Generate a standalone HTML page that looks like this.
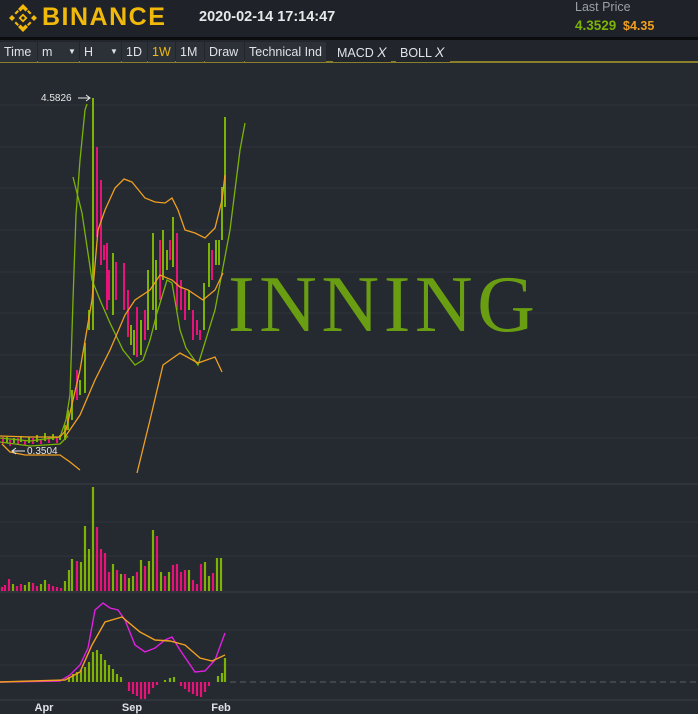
<!DOCTYPE html>
<html><head><meta charset="utf-8"><style>
*{margin:0;padding:0;box-sizing:border-box}
body{width:698px;height:714px;background:#252930;position:relative;overflow:hidden;font-family:"Liberation Sans",sans-serif}
#hdr{position:absolute;left:0;top:0;width:698px;height:37px;background:#1f2228}
#blk{position:absolute;left:0;top:37px;width:698px;height:3px;background:#0b0c0e}
#tb{position:absolute;left:0;top:40px;width:698px;height:23px;background:#22262c;border-bottom:2px solid #8a7f2a}
.b{position:absolute;top:2px;height:20px;background:#2c3037;color:#dfe2e6;font-size:12.5px;line-height:20px;padding-left:4px}
</style></head><body>
<div id="hdr">
<svg style="position:absolute;left:7px;top:2px" width="32" height="32" viewBox="0 0 32 32">
<g fill="#f0b90b"><path d="M16 2l5 5-2.5 2.5L16 7l-2.5 2.5L11 7z"/><path d="M16 30l5-5-2.5-2.5L16 25l-2.5-2.5L11 25z"/><path d="M2 16l3-3 3 3-3 3z"/><path d="M24 16l3-3 3 3-3 3z"/><path d="M16 11.5l4.5 4.5-4.5 4.5-4.5-4.5z M16 14l-2 2 2 2 2-2z" fill-rule="evenodd"/><path d="M7.5 11l3-3 1.5 1.5-3 3z"/><path d="M24.5 11l-3-3-1.5 1.5 3 3z"/><path d="M7.5 21l3 3 1.5-1.5-3-3z"/><path d="M24.5 21l-3 3-1.5-1.5 3-3z"/></g></svg>
<div style="position:absolute;left:42px;top:3px;color:#f0b90b;font-size:25px;font-weight:bold;letter-spacing:1.5px">BINANCE</div>
<div style="position:absolute;left:199px;top:9px;color:#e6e8ea;font-size:14.5px;font-weight:bold">2020-02-14 17:14:47</div>
<div style="position:absolute;left:575px;top:0px;color:#9aa0a8;font-size:12.5px">Last Price</div>
<div style="position:absolute;left:575px;top:18px;color:#7cb305;font-size:13.5px;font-weight:bold">4.3529</div>
<div style="position:absolute;left:623px;top:19px;color:#f0a020;font-size:12.5px;font-weight:bold">$4.35</div>
</div>
<div id="blk"></div>
<div id="tb">
<div class="b" style="left:0;width:37px">Time</div>
<div class="b" style="left:38px;width:41px">m<span style="position:absolute;left:30px;font-size:8px">▼</span></div>
<div class="b" style="left:80px;width:41px">H<span style="position:absolute;left:30px;font-size:8px">▼</span></div>
<div class="b" style="left:122px;width:25px">1D</div>
<div class="b" style="left:148px;width:27px;color:#f0b90b">1W</div>
<div class="b" style="left:176px;width:28px">1M</div>
<div class="b" style="left:205px;width:39px">Draw</div>
<div class="b" style="left:245px;width:81px">Technical Ind</div>
<div class="b" style="left:333px;width:58px;background:#22262c">MACD <i style="font-size:14px">X</i></div>
<div class="b" style="left:396px;width:54px;background:#22262c">BOLL <i style="font-size:14px">X</i></div>
</div>
<svg style="position:absolute;left:0;top:65px" width="698" height="649" viewBox="0 65 698 649">
<g stroke="#30353d" stroke-width="1">
<line x1="0" y1="105" x2="698" y2="105"/><line x1="0" y1="147" x2="698" y2="147"/><line x1="0" y1="188" x2="698" y2="188"/><line x1="0" y1="230" x2="698" y2="230"/><line x1="0" y1="272" x2="698" y2="272"/><line x1="0" y1="313" x2="698" y2="313"/><line x1="0" y1="355" x2="698" y2="355"/><line x1="0" y1="397" x2="698" y2="397"/><line x1="0" y1="438" x2="698" y2="438"/>
<line x1="0" y1="522" x2="698" y2="522"/><line x1="0" y1="556" x2="698" y2="556"/>
<line x1="0" y1="630" x2="698" y2="630"/><line x1="0" y1="665" x2="698" y2="665"/>
</g>
<g stroke="#3a3f47"><line x1="0" y1="484" x2="698" y2="484"/><line x1="0" y1="592" x2="698" y2="592"/><line x1="0" y1="700" x2="698" y2="700"/></g>
<line x1="230" y1="682" x2="698" y2="682" stroke="#5a5f66" stroke-dasharray="6,4"/>
<text x="228" y="331" font-family="Liberation Serif,serif" font-size="80" letter-spacing="4.5" fill="#6a9e12">INNING</text>
<g stroke-width="2">
<g stroke="#7cb305">
<path d="M7 437v6M14 438v5M21 436v6M29 437v6M37 435v7M45 433v8M53 434v6M60 435v5M65 425v15M68 410v20M72 390v30M80 380v15M85 343v50M89 310v20M93 98v232M113 253v62M131 325v20M134 330v25M141 320v35M148 270v60M153 233v77M156 260v70M163 230v50M167 250v20M173 217v50M189 290v20M204 283v47M209 243v44M216 240v25M219 240v25M222 187v53M225 117v90"/>
</g>
<g stroke="#e8137a">
<path d="M3 437v7M10 440v6M18 438v7M25 440v5M33 438v6M41 439v5M49 437v6M57 438v5M77 370v30M97 147v90M101 180v85M104 245v15M107 243v67M109 270v30M116 262v38M124 263v47M128 290v47M137 307v50M145 310v30M160 240v60M170 240v20M177 233v77M181 280v30M185 290v30M193 310v30M197 320v15M200 330v10M212 250v30"/>
</g>
</g>
<g fill="none" stroke-width="1.3">
<polyline stroke="#7cb305" points="0,438 30,441 60,437 66,420 70,395 73,300 76,215 80,160 85,110 87,104"/>
<polyline stroke="#7cb305" points="73,177 82,213 92,280 100,300 110,323 123,350 135,365 143,360 150,340 157,313 167,280 172,283 180,330 186,348 198,365 215,310 230,230 240,150 245,123"/>
<polyline stroke="#7cb305" points="0,442 30,446 60,444 68,436"/>
<polyline stroke="#f0a020" points="0,436 30,437 60,437 66,430 80,370 92,300 98,230 105,210 115,188 124,179 132,182 145,198 155,202 165,203 172,198 178,210 185,230 195,233 205,238 215,228 222,200 225,175"/>
<polyline stroke="#f0a020" points="65,437 80,415 95,380 110,350 125,315 135,300 150,290 160,275 172,280 180,287 188,290 203,300 215,290 223,273"/>
<polyline stroke="#f0a020" points="137,473 150,420 163,365 180,353 198,363 215,357 222,372"/>
<polyline stroke="#f0a020" points="2,444 10,452 25,455 60,455 70,462 80,470"/>
</g>
<text x="41" y="101" font-size="10" fill="#e8e8e8" font-family="Liberation Sans">4.5826</text>
<path d="M78 98h12M86 95l4 3-4 3" stroke="#e8e8e8" fill="none"/>
<text x="27" y="454" font-size="10" fill="#e8e8e8" font-family="Liberation Sans">0.3504</text>
<path d="M12 451h13M16 448l-4 3 4 3" stroke="#e8e8e8" fill="none"/>
<g stroke-width="2.2">
<g stroke="#7cb305"><path d="M13 591v-7M25 591v-6M29 591v-9M41 591v-7M45 591v-11M65 591v-10M69 591v-21M72 591v-32M81 591v-29M85 591v-65M89 591v-42M93 591v-104M113 591v-27M121 591v-17M129 591v-13M133 591v-15M141 591v-31M149 591v-30M153 591v-61M161 591v-19M169 591v-19M189 591v-21M205 591v-29M209 591v-15M217 591v-33M221 591v-33"/></g>
<g stroke="#e8137a"><path d="M2 591v-4M5 591v-6M9 591v-12M17 591v-5M21 591v-7M33 591v-8M37 591v-5M49 591v-7M53 591v-5M57 591v-4M61 591v-3M77 591v-30M97 591v-64M101 591v-42M105 591v-38M109 591v-19M117 591v-21M125 591v-17M137 591v-19M145 591v-25M157 591v-55M165 591v-15M173 591v-26M177 591v-27M181 591v-19M185 591v-21M193 591v-11M197 591v-7M201 591v-27M213 591v-18"/></g>
</g>
<g stroke-width="2.2">
<g stroke="#7cb305"><path d="M69 682v-5M73 682v-8M77 682v-10M81 682v-12M85 682v-15M89 682v-20M93 682v-30M97 682v-32M101 682v-28M105 682v-22M109 682v-17M113 682v-13M117 682v-8M121 682v-5M165 682v-2M170 682v-4M174 682v-5M218 682v-6M222 682v-9M225 682v-24"/></g>
<g stroke="#e8137a"><path d="M129 682v9M133 682v12M137 682v14M141 682v17M145 682v17M149 682v12M153 682v6M157 682v3M181 682v4M185 682v7M189 682v10M193 682v12M197 682v14M201 682v15M205 682v10M209 682v4"/></g>
</g>
<g fill="none" stroke-width="1.4">
<polyline stroke="#e020e0" points="0,682 60,681 70,675 80,665 88,648 95,610 103,603 110,608 118,610 125,620 135,645 145,652 155,648 165,640 172,637 180,650 195,672 205,671 215,660 225,633"/>
<polyline stroke="#f0a020" points="0,682 65,680 80,672 92,645 105,622 122,617 140,632 155,640 170,641 185,645 200,658 212,661 225,655"/>
</g>
<g font-size="11" font-weight="bold" fill="#dfe2e6" font-family="Liberation Sans" text-anchor="middle">
<text x="44" y="711">Apr</text><text x="132" y="711">Sep</text><text x="221" y="711">Feb</text></g>
</svg>
</body></html>
